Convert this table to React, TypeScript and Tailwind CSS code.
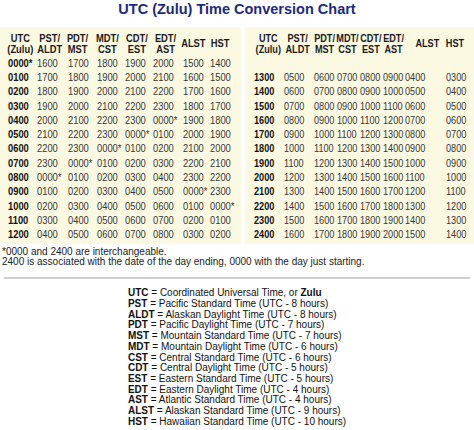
import React from "react";

const leftRows: string[][] = [
  ["0000*", "1600", "1700", "1800", "1900", "2000", "1500", "1400"],
  ["0100", "1700", "1800", "1900", "2000", "2100", "1600", "1500"],
  ["0200", "1800", "1900", "2000", "2100", "2200", "1700", "1600"],
  ["0300", "1900", "2000", "2100", "2200", "2300", "1800", "1700"],
  ["0400", "2000", "2100", "2200", "2300", "0000*", "1900", "1800"],
  ["0500", "2100", "2200", "2300", "0000*", "0100", "2000", "1900"],
  ["0600", "2200", "2300", "0000*", "0100", "0200", "2100", "2000"],
  ["0700", "2300", "0000*", "0100", "0200", "0300", "2200", "2100"],
  ["0800", "0000*", "0100", "0200", "0300", "0400", "2300", "2200"],
  ["0900", "0100", "0200", "0300", "0400", "0500", "0000*", "2300"],
  ["1000", "0200", "0300", "0400", "0500", "0600", "0100", "0000*"],
  ["1100", "0300", "0400", "0500", "0600", "0700", "0200", "0100"],
  ["1200", "0400", "0500", "0600", "0700", "0800", "0300", "0200"],
];

const rightRows: string[][] = [
  ["1300", "0500", "0600", "0700", "0800", "0900", "0400", "0300"],
  ["1400", "0600", "0700", "0800", "0900", "1000", "0500", "0400"],
  ["1500", "0700", "0800", "0900", "1000", "1100", "0600", "0500"],
  ["1600", "0800", "0900", "1000", "1100", "1200", "0700", "0600"],
  ["1700", "0900", "1000", "1100", "1200", "1300", "0800", "0700"],
  ["1800", "1000", "1100", "1200", "1300", "1400", "0900", "0800"],
  ["1900", "1100", "1200", "1300", "1400", "1500", "1000", "0900"],
  ["2000", "1200", "1300", "1400", "1500", "1600", "1100", "1000"],
  ["2100", "1300", "1400", "1500", "1600", "1700", "1200", "1100"],
  ["2200", "1400", "1500", "1600", "1700", "1800", "1300", "1200"],
  ["2300", "1500", "1600", "1700", "1800", "1900", "1400", "1300"],
  ["2400", "1600", "1700", "1800", "1900", "2000", "1500", "1400"],
];

const headers: [string, string | null][] = [
  ["UTC", "(Zulu)"],
  ["PST/", "ALDT"],
  ["PDT/", "MST"],
  ["MDT/", "CST"],
  ["CDT/", "EST"],
  ["EDT/", "AST"],
  ["ALST", null],
  ["HST", null],
];

const legend: [string, string][] = [
  ["PST", "Pacific Standard Time (UTC - 8 hours)"],
  ["ALDT", "Alaskan Daylight Time (UTC - 8 hours)"],
  ["PDT", "Pacific Daylight Time (UTC - 7 hours)"],
  ["MST", "Mountain Standard Time (UTC - 7 hours)"],
  ["MDT", "Mountain Daylight Time (UTC - 6 hours)"],
  ["CST", "Central Standard Time (UTC - 6 hours)"],
  ["CDT", "Central Daylight Time (UTC - 5 hours)"],
  ["EST", "Eastern Standard Time (UTC - 5 hours)"],
  ["EDT", "Eastern Daylight Time (UTC - 4 hours)"],
  ["AST", "Atlantic Standard Time (UTC - 4 hours)"],
  ["ALST", "Alaskan Standard Time (UTC - 9 hours)"],
  ["HST", "Hawaiian Standard Time (UTC - 10 hours)"],
];

// offsets: ml of each zero-width centered header = distance from previous center
function Header({ offsets, scale }: { offsets: string[]; scale: string }) {
  return (
    <div className="flex h-[24px] items-center font-bold text-[11px] leading-[11px] text-[#1a1a1a]">
      {headers.map(([a, b], i) => (
        <div key={i} className={`${offsets[i]} w-0 flex justify-center`}>
          <div className={`text-center whitespace-nowrap ${scale} origin-center`}>
            <div>{a}</div>
            {b && <div>{b}</div>}
          </div>
        </div>
      ))}
    </div>
  );
}

function Rows({ rows, cols, scale }: { rows: string[][]; cols: string; scale: string }) {
  return (
    <div className="text-[11px]">
      {rows.map((r, i) => (
        <div key={i} className={`grid ${cols} h-[14.3px] items-center leading-[14px]`}>
          {r.map((c, j) => (
            <div
              key={j}
              className={
                j === 0
                  ? `font-bold text-[#111] whitespace-nowrap ${scale} origin-left`
                  : `text-[#363636] whitespace-nowrap ${scale} origin-left`
              }
            >
              {c}
            </div>
          ))}
        </div>
      ))}
    </div>
  );
}

export default function App() {
  return (
    <div className="w-[474px] h-[430px] bg-white overflow-hidden" style={{ fontFamily: '"Liberation Sans", Arial, sans-serif' }}>
      <h1 className="text-center font-bold text-[14.5px] leading-[19px] text-[#1b2a7c]">
        UTC (Zulu) Time Conversion Chart
      </h1>
      <div className="mt-[8px] flex gap-[4px]">
        <div className="w-[241px] bg-[#fcf9e3] pt-[4.5px] pb-[3px]">
          <Header
            scale="scale-x-[0.85]"
            offsets={[
              "ml-[20.5px]",
              "ml-[29.5px]",
              "ml-[28px]",
              "ml-[29px]",
              "ml-[29.5px]",
              "ml-[29px]",
              "ml-[27.5px]",
              "ml-[26.5px]",
            ]}
          />
          <div className="pl-[8px]">
            <Rows scale="scale-x-[0.85]" rows={leftRows} cols="grid-cols-[29px_31px_29px_28px_28px_30px_27px_1fr]" />
          </div>
        </div>
        <div className="flex-1 bg-[#fcf9e3] pt-[4.5px] pb-[3px]">
          <Header
            scale="scale-x-[0.83]"
            offsets={[
              "ml-[23px]",
              "ml-[29.5px]",
              "ml-[27px]",
              "ml-[23px]",
              "ml-[23px]",
              "ml-[23px]",
              "ml-[33.5px]",
              "ml-[28px]",
            ]}
          />
          <div className="h-[14.3px]" />
          <div className="pl-[9px]">
            <Rows scale="scale-x-[0.83]" rows={rightRows} cols="grid-cols-[30px_30px_23px_23px_23px_22px_41px_1fr]" />
          </div>
        </div>
      </div>
      <div className="pl-[2px] pt-[3px] text-[10px] leading-[10px] text-[#222]">
        <div>*0000 and 2400 are interchangeable.</div>
        <div>2400 is associated with the date of the day ending, 0000 with the day just starting.</div>
      </div>
      <div className="mx-[4px] mt-[10px] h-[2px] bg-[#cfcfcf]" />
      <div className="mx-auto mt-[9px] w-fit text-[10px] leading-[10.7px] text-[#111]">
        <div>
          <span className="font-bold">UTC</span> = Coordinated Universal Time, or <span className="font-bold">Zulu</span>
        </div>
        {legend.map(([k, v]) => (
          <div key={k}>
            <span className="font-bold">{k}</span> = {v}
          </div>
        ))}
      </div>
    </div>
  );
}
